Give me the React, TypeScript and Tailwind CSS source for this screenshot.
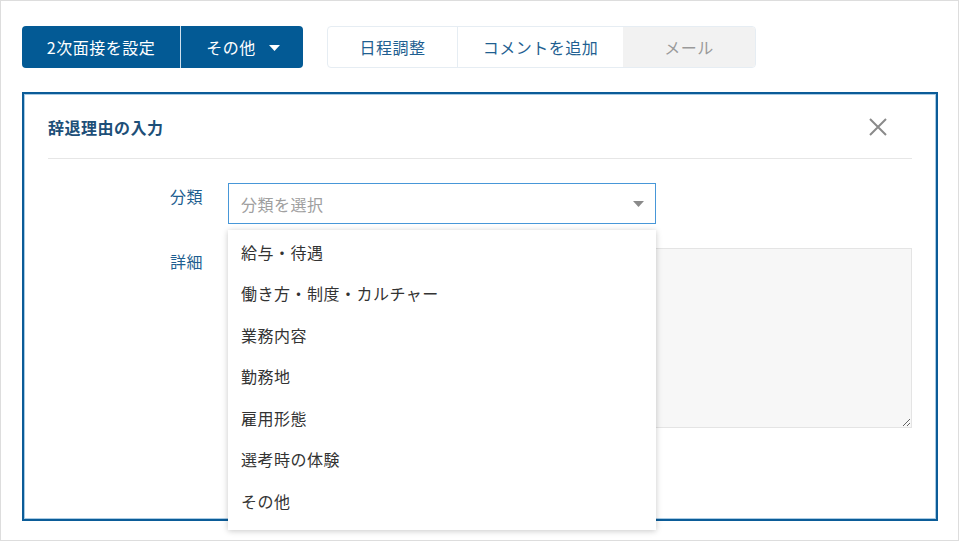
import React from 'react';

const reasons = [
  '給与・待遇',
  '働き方・制度・カルチャー',
  '業務内容',
  '勤務地',
  '雇用形態',
  '選考時の体験',
  'その他',
];

const Caret: React.FC<{ className?: string }> = ({ className }) => (
  <svg width="11" height="6" viewBox="0 0 11 6" className={className}>
    <path d="M0 0 H11 L5.5 6 Z" fill="currentColor" />
  </svg>
);

const App: React.FC = () => {
  return (
    <div
      className="w-[959px] h-[541px] border border-[#dddddd] bg-white overflow-hidden text-[16px] tracking-[0.5px]"
      style={{ fontFamily: '"Noto Sans CJK JP", "Noto Sans", sans-serif' }}
    >
      <div className="pl-[21px] pt-[25px]">
        {/* action bar */}
        <div className="flex items-center gap-6 h-[42px]">
          <div className="flex h-[42px] rounded-[4px] bg-[#035a95] text-white overflow-hidden">
            <button className="w-[159px] h-full flex items-center justify-center border-r border-[#cfe0ee]">
              2次面接を設定
            </button>
            <button className="w-[122px] h-full flex items-center justify-center gap-[13px] pl-[2px]">
              <span>その他</span>
              <Caret className="text-white mt-[1px]" />
            </button>
          </div>

          <div className="flex h-[42px] rounded-[4px] border border-[#e6edf3] overflow-hidden text-[#1f5f91]">
            <button className="w-[130px] h-full flex items-center justify-center border-r border-[#e6edf3]">
              日程調整
            </button>
            <button className="w-[165px] h-full flex items-center justify-center">
              コメントを追加
            </button>
            <button className="w-[132px] h-full flex items-center justify-center bg-[#f2f2f2] text-[#9a9a9a]">
              メール
            </button>
          </div>
        </div>

        {/* modal panel */}
        <div className="mt-6 w-[916px] h-[429px] border-2 border-[#0b5c98] shadow-[inset_0_0_0_1px_#a9cbe4] bg-white">
          <div className="mx-6 h-[65px] flex items-center justify-between border-b border-[#e6e6e6]">
            <h2 className="font-bold text-[#1d4f78] pt-[2px]">辞退理由の入力</h2>
            <svg width="20" height="20" viewBox="0 0 20 20" className="mr-[24px] mt-[1px]">
              <path d="M2 2 L18 18 M18 2 L2 18" stroke="#8a8a8a" strokeWidth="2" />
            </svg>
          </div>

          <div className="mx-6 pt-6 grid grid-cols-[155px_1fr] gap-x-[25px] gap-y-6">
            <div className="text-right text-[#1f5f91] pt-[1px]">分類</div>
            <div className="relative">
              <div className="w-[428px] h-[41px] border border-[#4797d8] flex items-center justify-between pl-[12px] pr-[11px] text-[#a0a0a0]">
                <span>分類を選択</span>
                <Caret className="text-[#8a8a8a]" />
              </div>

              <ul className="absolute left-0 top-[47px] z-10 w-[428px] bg-white shadow-[0_1px_6px_rgba(0,0,0,0.22)] pt-[1px] pb-[8px] text-[#333333]">
                {reasons.map(r => (
                  <li key={r} className="h-[41.5px] flex items-center pl-[13px]">
                    {r}
                  </li>
                ))}
              </ul>
            </div>

            <div className="text-right text-[#1f5f91] pt-[1px]">詳細</div>
            <textarea className="w-[684px] h-[180px] bg-[#f7f7f7] border border-[#e4e4e4] outline-none" />
          </div>
        </div>
      </div>
    </div>
  );
};

export default App;
